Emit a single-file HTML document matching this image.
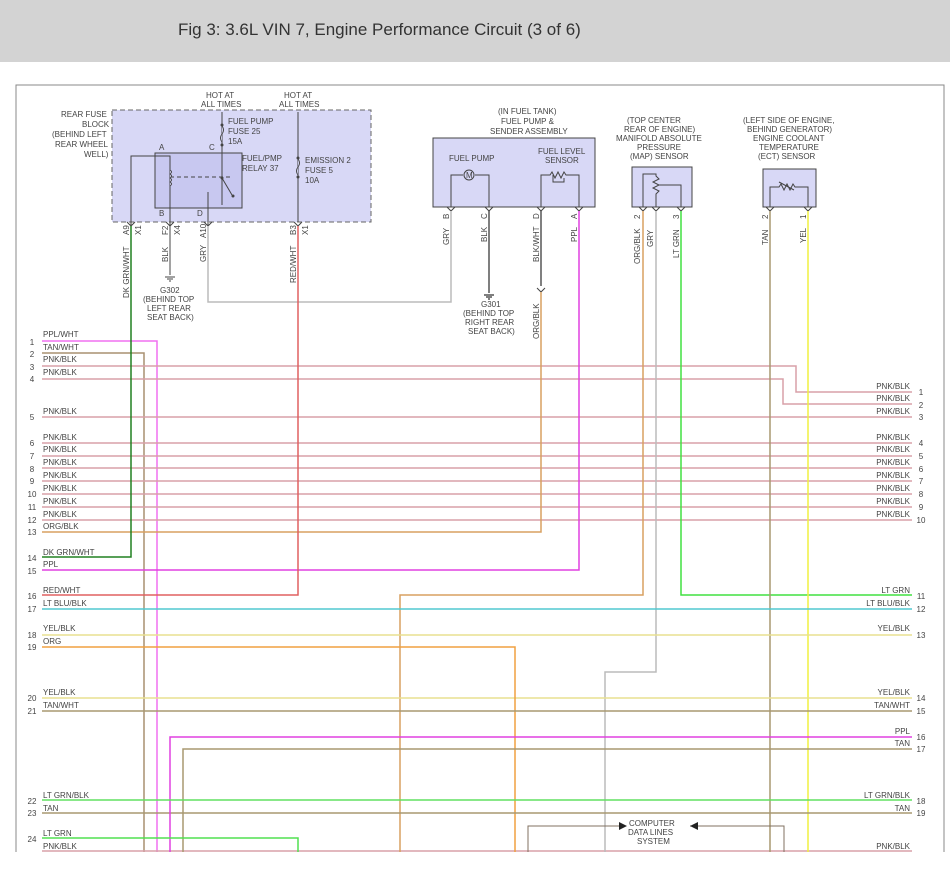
<!DOCTYPE html>
<html><head><meta charset="utf-8"><style>
html,body{margin:0;padding:0;background:#fff;width:950px;height:872px;overflow:hidden}
.hd{position:absolute;left:0;top:0;width:950px;height:62px;background:#d3d3d3}
.hd span{position:absolute;left:178px;top:20px;font:17px "Liberation Sans",sans-serif;color:#333}
svg{position:absolute;left:0;top:0}
text{font-family:"Liberation Sans",sans-serif;font-size:8px;fill:#444}
</style></head><body>
<div class="hd"><span>Fig 3: 3.6L VIN 7, Engine Performance Circuit (3 of 6)</span></div>
<svg width="950" height="872" viewBox="0 0 950 872">
<!-- frame -->
<path d="M16 852 V85 H944 V852" fill="none" stroke="#888" stroke-width="1"/>
<!-- fuse block -->
<rect x="112" y="110" width="259" height="112" fill="#d8d8f6" stroke="#666" stroke-dasharray="5,3"/>
<rect x="155" y="153" width="87" height="55" fill="#c8c8f0" stroke="#444"/>
<g stroke="#444" fill="none" stroke-width="1">
<path d="M131 225 V156 H170 V165"/>
<path d="M170 156 V208"/><path d="M222 112 V205"/>
<path d="M298 112 V222"/>
<path d="M170 208 V225"/><path d="M208 192 V225"/>
<path d="M222 178 L232 195"/>
<path d="M170 177 H232" stroke-dasharray="4,3"/>
</g>
<g fill="#444"><circle cx="222" cy="178" r="1.5"/><circle cx="233" cy="196" r="1.5"/><circle cx="222" cy="125" r="1.5"/><circle cx="222" cy="145" r="1.5"/><circle cx="298" cy="158" r="1.5"/><circle cx="298" cy="177" r="1.5"/></g>
<path d="M222 126 q3 4 0 8 q-3 4 0 8 M298 159 q3 4 0 8 q-3 4 0 8 M170 170 q3 2 0 4 q3 2 0 4 q3 2 0 4 q3 2 0 4" stroke="#444" fill="#d8d8f6"/>
<text x="61" y="117">REAR FUSE</text><text x="82" y="127">BLOCK</text><text x="52" y="137">(BEHIND LEFT</text><text x="55" y="147">REAR WHEEL</text><text x="84" y="157">WELL)</text>
<text x="206" y="98">HOT AT</text><text x="201" y="107">ALL TIMES</text>
<text x="284" y="98">HOT AT</text><text x="279" y="107">ALL TIMES</text>
<text x="228" y="124">FUEL PUMP</text><text x="228" y="134">FUSE 25</text><text x="228" y="144">15A</text>
<text x="242" y="161">FUEL/PMP</text><text x="242" y="171">RELAY 37</text>
<text x="305" y="163">EMISSION 2</text><text x="305" y="173">FUSE 5</text><text x="305" y="183">10A</text>
<text x="159" y="150">A</text><text x="209" y="150">C</text><text x="159" y="216">B</text><text x="197" y="216">D</text>
<g transform="rotate(-90)">
<text x="-235" y="129">A9</text><text x="-235" y="141">X1</text><text x="-235" y="168">F2</text><text x="-235" y="180">X4</text><text x="-238" y="206">A10</text><text x="-235" y="296">B3</text><text x="-235" y="308">X1</text>
<text x="-298" y="129">DK GRN/WHT</text><text x="-262" y="168">BLK</text><text x="-262" y="206">GRY</text><text x="-283" y="296">RED/WHT</text>
<text x="-245" y="449">GRY</text><text x="-242" y="487">BLK</text><text x="-262" y="539">BLK/WHT</text><text x="-242" y="577">PPL</text>
<text x="-339" y="539">ORG/BLK</text>
<text x="-264" y="640">ORG/BLK</text><text x="-247" y="653">GRY</text><text x="-258" y="679">LT GRN</text>
<text x="-245" y="768">TAN</text><text x="-243" y="806">YEL</text>
<text x="-219" y="449">B</text><text x="-219" y="487">C</text><text x="-219" y="539">D</text><text x="-219" y="577">A</text>
<text x="-219" y="640">2</text><text x="-219" y="679">3</text><text x="-219" y="768">2</text><text x="-219" y="806">1</text>
</g>
<!-- ground G302 -->
<path d="M170 225 V275 M165 277 H175 M167 279 H173 M169 281 H171" stroke="#444"/>
<text x="160" y="293">G302</text><text x="143" y="302">(BEHIND TOP</text><text x="147" y="311">LEFT REAR</text><text x="147" y="320">SEAT BACK)</text>
<!-- fuel pump assy -->
<text x="498" y="114">(IN FUEL TANK)</text><text x="501" y="124">FUEL PUMP &amp;</text><text x="490" y="134">SENDER ASSEMBLY</text>
<rect x="433" y="138" width="162" height="69" fill="#d8d8f6" stroke="#444"/>
<text x="449" y="161">FUEL PUMP</text><text x="538" y="154">FUEL LEVEL</text><text x="545" y="163">SENSOR</text>
<circle cx="469" cy="175" r="5" fill="none" stroke="#444"/><text x="466" y="178">M</text>
<g stroke="#444" fill="none">
<path d="M451 207 V175 H463 M475 175 H489 V207"/>
<path d="M541 207 V175 H550 l2 -3 l3 6 l3 -6 l3 6 l3 -6 l2 3 H579 V207"/>
<path d="M553 175 V182 H564 V178"/>
</g>
<!-- MAP -->
<text x="627" y="123">(TOP CENTER</text><text x="624" y="132">REAR OF ENGINE)</text><text x="616" y="141">MANIFOLD ABSOLUTE</text><text x="637" y="150">PRESSURE</text><text x="630" y="159">(MAP) SENSOR</text>
<rect x="632" y="167" width="60" height="40" fill="#d8d8f6" stroke="#444"/>
<g stroke="#444" fill="none"><path d="M643 207 V174 H656 V176 l3 3 l-6 3 l6 3 l-6 3 l6 3 l-3 3 V207 M659 185 H681 V207"/></g>
<!-- ECT -->
<text x="743" y="123">(LEFT SIDE OF ENGINE,</text><text x="747" y="132">BEHIND GENERATOR)</text><text x="753" y="141">ENGINE COOLANT</text><text x="759" y="150">TEMPERATURE</text><text x="758" y="159">(ECT) SENSOR</text>
<rect x="763" y="169" width="53" height="38" fill="#d8d8f6" stroke="#444"/>
<g stroke="#444" fill="none"><path d="M770 207 V187 H779 l2 -3 l3 6 l3 -6 l3 6 l3 -6 l2 3 H808 V207 M779 182 L794 190"/></g>
<!-- connector chevrons -->
<g stroke="#444" fill="none">
<path d="M127 222 l4 4 l4 -4 M166 222 l4 4 l4 -4 M204 222 l4 4 l4 -4 M294 222 l4 4 l4 -4 M447 207 l4 4 l4 -4 M485 207 l4 4 l4 -4 M537 207 l4 4 l4 -4 M575 207 l4 4 l4 -4 M639 207 l4 4 l4 -4 M652 207 l4 4 l4 -4 M677 207 l4 4 l4 -4 M766 207 l4 4 l4 -4 M804 207 l4 4 l4 -4 M537 288 l4 4 l4 -4"/>
</g>
<!-- G301 -->
<path d="M489 211 V293 M484 295 H494 M486 297 H492 M488 299 H490" stroke="#555" stroke-width="1.5"/>
<text x="481" y="307">G301</text><text x="463" y="316">(BEHIND TOP</text><text x="465" y="325">RIGHT REAR</text><text x="468" y="334">SEAT BACK)</text>
<!-- wires -->
<g fill="none" stroke-width="1.5">
<path d="M208 226 V302 H451 V211" stroke="#bbb"/>
<path d="M541 211 V286" stroke="#555"/>
<path d="M42 341 H157 V852" stroke="#f070f0"/>
<path d="M42 353 H144 V852" stroke="#a89070"/>
<path d="M42 366 H796 V392 H912" stroke="#d8a0a8"/>
<path d="M42 379 H783 V404 H912" stroke="#d8a0a8"/>
<path d="M42 417 H912 M42 443 H912 M42 456 H912 M42 468 H912 M42 481 H912 M42 494 H912 M42 507 H912 M42 520 H912 M42 851 H912" stroke="#d8a0a8"/>
<path d="M42 532 H541 V292" stroke="#d8a060"/>
<path d="M42 557 H131 V226" stroke="#208020"/>
<path d="M42 570 H579 V211" stroke="#e040e0"/>
<path d="M42 595 H298 V226" stroke="#e06060"/>
<path d="M643 211 V595 H400 V852" stroke="#d8a060"/>
<path d="M656 211 V672 H605 V852" stroke="#bbb"/>
<path d="M681 211 V595 H912" stroke="#40e040"/>
<path d="M770 211 V852" stroke="#a89870"/>
<path d="M808 211 V852" stroke="#f0f040"/>
<path d="M42 609 H912" stroke="#50c8d0"/>
<path d="M42 635 H912 M42 698 H912" stroke="#e8e090"/>
<path d="M42 647 H515 V852" stroke="#f0a040"/>
<path d="M42 711 H912 M42 813 H912" stroke="#a89870"/>
<path d="M170 852 V737 H912" stroke="#e040e0"/>
<path d="M183 852 V749 H912" stroke="#a89870"/>
<path d="M42 800 H912" stroke="#60e060"/>
<path d="M42 838 H298 V852" stroke="#50e050"/>
<path d="M528 852 V826 H620 M690 826 H784 V852" stroke="#807060" stroke-width="1"/>
</g>
<path d="M619 822 l8 4 l-8 4z M698 822 l-8 4 l8 4z" fill="#222"/>
<text x="629" y="826">COMPUTER</text><text x="628" y="835">DATA LINES</text><text x="637" y="844">SYSTEM</text>
<!-- left labels -->
<g>
<text x="43" y="337">PPL/WHT</text><text x="43" y="350">TAN/WHT</text><text x="43" y="362">PNK/BLK</text><text x="43" y="375">PNK/BLK</text><text x="43" y="414">PNK/BLK</text>
<text x="43" y="440">PNK/BLK</text><text x="43" y="452">PNK/BLK</text><text x="43" y="465">PNK/BLK</text><text x="43" y="478">PNK/BLK</text><text x="43" y="491">PNK/BLK</text><text x="43" y="504">PNK/BLK</text><text x="43" y="517">PNK/BLK</text><text x="43" y="529">ORG/BLK</text>
<text x="43" y="555">DK GRN/WHT</text><text x="43" y="567">PPL</text><text x="43" y="593">RED/WHT</text><text x="43" y="606">LT BLU/BLK</text><text x="43" y="631">YEL/BLK</text><text x="43" y="644">ORG</text>
<text x="43" y="695">YEL/BLK</text><text x="43" y="708">TAN/WHT</text><text x="43" y="798">LT GRN/BLK</text><text x="43" y="811">TAN</text><text x="43" y="836">LT GRN</text><text x="43" y="849">PNK/BLK</text>
</g>
<g text-anchor="middle">
<text x="32" y="345">1</text><text x="32" y="357">2</text><text x="32" y="370">3</text><text x="32" y="382">4</text><text x="32" y="420">5</text><text x="32" y="446">6</text><text x="32" y="459">7</text><text x="32" y="472">8</text><text x="32" y="484">9</text><text x="32" y="497">10</text><text x="32" y="510">11</text><text x="32" y="523">12</text><text x="32" y="535">13</text><text x="32" y="561">14</text><text x="32" y="574">15</text><text x="32" y="599">16</text><text x="32" y="612">17</text><text x="32" y="638">18</text><text x="32" y="650">19</text><text x="32" y="701">20</text><text x="32" y="714">21</text><text x="32" y="804">22</text><text x="32" y="816">23</text><text x="32" y="842">24</text>
<text x="921" y="395">1</text><text x="921" y="408">2</text><text x="921" y="420">3</text><text x="921" y="446">4</text><text x="921" y="459">5</text><text x="921" y="472">6</text><text x="921" y="484">7</text><text x="921" y="497">8</text><text x="921" y="510">9</text><text x="921" y="523">10</text><text x="921" y="599">11</text><text x="921" y="612">12</text><text x="921" y="638">13</text><text x="921" y="701">14</text><text x="921" y="714">15</text><text x="921" y="740">16</text><text x="921" y="752">17</text><text x="921" y="804">18</text><text x="921" y="816">19</text>
</g>
<g text-anchor="end">
<text x="910" y="389">PNK/BLK</text><text x="910" y="401">PNK/BLK</text><text x="910" y="414">PNK/BLK</text><text x="910" y="440">PNK/BLK</text><text x="910" y="452">PNK/BLK</text><text x="910" y="465">PNK/BLK</text><text x="910" y="478">PNK/BLK</text><text x="910" y="491">PNK/BLK</text><text x="910" y="504">PNK/BLK</text><text x="910" y="517">PNK/BLK</text>
<text x="910" y="593">LT GRN</text><text x="910" y="606">LT BLU/BLK</text><text x="910" y="631">YEL/BLK</text><text x="910" y="695">YEL/BLK</text><text x="910" y="708">TAN/WHT</text><text x="910" y="734">PPL</text><text x="910" y="746">TAN</text><text x="910" y="798">LT GRN/BLK</text><text x="910" y="811">TAN</text><text x="910" y="849">PNK/BLK</text>
</g>
<rect x="0" y="852" width="950" height="20" fill="#fff"/>
</svg>
</body></html>
